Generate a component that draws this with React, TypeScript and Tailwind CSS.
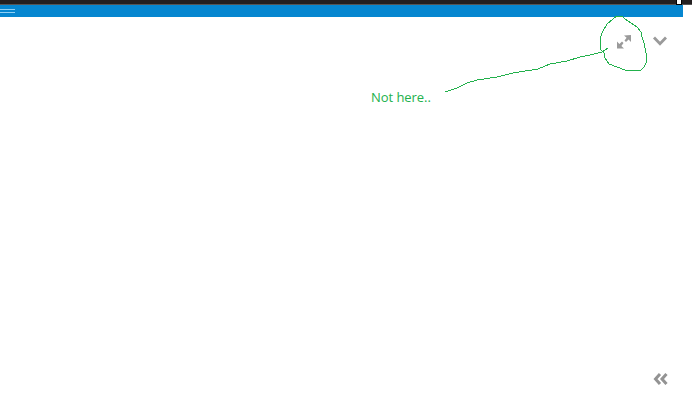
const circlePoints =
  "617,16 622,16 625,19 631,23 637,27 641,32 642,37 644,43 646,53 646,63 644,67 641,70 625,70 617,67 609,64 605,58 604,53 600,49 600,38 603,31 607,24 613,19 617,16";
const linePoints =
  "445,92 457,88 467,83 477,80 497,77 513,73 538,69 550,64 567,61 580,57 590,55 602,52 608,48";

export default function App() {
  return (
    <div className="relative h-[410px] w-[692px] overflow-hidden bg-white font-['Open_Sans',sans-serif]">
      {/* Top chrome */}
      <div className="relative h-[5px] border-b border-[#555555] bg-[#231f20]">
        <div className="absolute left-[676px] top-0 h-[5px] w-[6px] border-x border-b border-black bg-white" />
      </div>
      <div className="flex h-[12px] w-[683px] items-center bg-[#0686d0]">
        <div className="flex w-[15px] flex-col gap-[2px]">
          <div className="h-px bg-[#8fd0f5]" />
          <div className="h-px bg-[#8fd0f5]" />
        </div>
      </div>

      {/* Window controls */}
      <svg className="absolute left-[614px] top-[32px]" width="20" height="20" viewBox="0 0 20 20" fill="#9a9a9a">
        <path d="M10 3.5 L17 3 L17 10 L14.6 7.6 L12 10 L10.5 8.5 L12.6 5.8 Z" />
        <path d="M3 16.5 L3 9.5 L5.4 11.9 L8 9.5 L9.5 11 L7.4 13.9 L10 16.5 Z" />
      </svg>
      <svg className="absolute left-[652px] top-[34px]" width="16" height="14" viewBox="0 0 16 14" fill="none" stroke="#9a9a9a" strokeWidth="2.8">
        <path d="M2 3.5 L8 9.7 L14 3.5" />
      </svg>
      <svg className="absolute left-[653px] top-[372px]" width="16" height="14" viewBox="0 0 16 14" fill="none" stroke="#939393" strokeWidth="3">
        <path d="M7 2 L2.5 7 L7 12" />
        <path d="M13.5 2 L9 7 L13.5 12" />
      </svg>

      {/* Hand-drawn annotation */}
      <svg className="absolute inset-0" width="692" height="410" fill="none" stroke="#22b14c" strokeWidth="1" shapeRendering="crispEdges">
        <polyline points={circlePoints} />
        <polyline points={linePoints} />
      </svg>
      <span className="absolute left-[371px] top-[88px] text-[13px] font-medium leading-[18px] tracking-[-0.05px] text-[#22b14c]">Not here..</span>
    </div>
  );
}
